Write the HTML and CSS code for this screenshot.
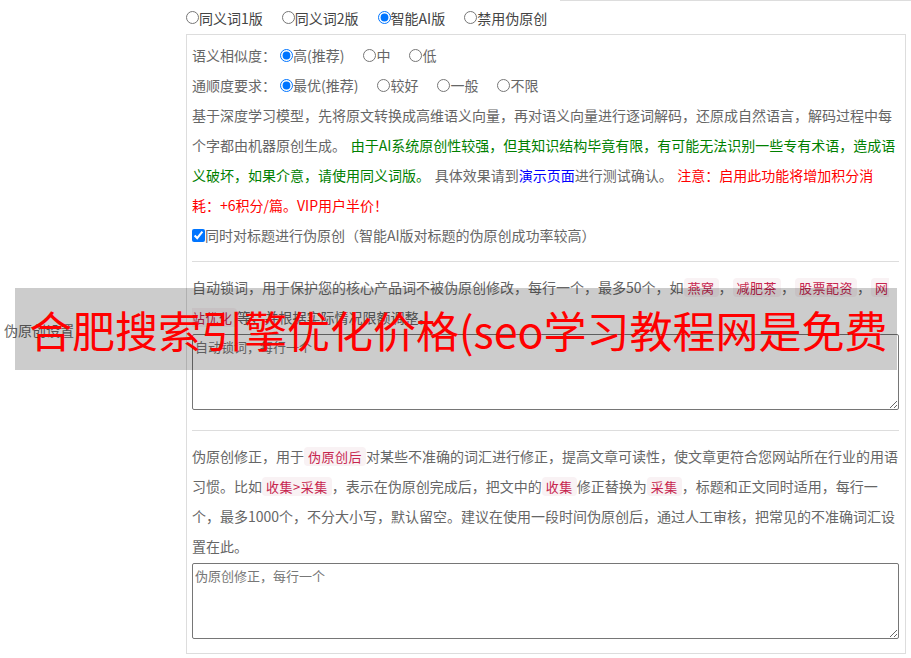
FILE: index.html
```html
<!DOCTYPE html>
<html lang="zh-CN">
<head>
<meta charset="utf-8">
<title>伪原创设置</title>
<link rel="stylesheet" href="styles.css">
</head>
<body>
<div class="page">
  <div class="row">
    <div class="label">伪原创设置</div>
    <div class="content">
      <div class="top-line"></div>
      <div class="modes">
        <label class="mode"><input class="rd" type="radio" name="mode">同义词1版</label>
        <label class="mode"><input class="rd" type="radio" name="mode">同义词2版</label>
        <label class="mode"><input class="rd" type="radio" name="mode" checked>智能AI版</label>
        <label class="mode"><input class="rd" type="radio" name="mode">禁用伪原创</label>
      </div>
      <div class="box">
        <div class="opt-row">
          <span>语义相似度：</span>
          <label class="opt"><input class="rd" type="radio" name="sim" checked>高(推荐)</label>
          <label class="opt"><input class="rd" type="radio" name="sim">中</label>
          <label class="opt"><input class="rd" type="radio" name="sim">低</label>
        </div>
        <div class="opt-row">
          <span>通顺度要求：</span>
          <label class="opt"><input class="rd" type="radio" name="flu" checked>最优(推荐)</label>
          <label class="opt"><input class="rd" type="radio" name="flu">较好</label>
          <label class="opt"><input class="rd" type="radio" name="flu">一般</label>
          <label class="opt"><input class="rd" type="radio" name="flu">不限</label>
        </div>
        <p class="para">基于深度学习模型，先将原文转换成高维语义向量，再对语义向量进行逐词解码，还原成自然语言，解码过程中每个字都由机器原创生成。 <span class="green">由于AI系统原创性较强，但其知识结构毕竟有限，有可能无法识别一些专有术语，造成语义破坏，如果介意，请使用同义词版。</span> 具体效果请到<span class="blue">演示页面</span>进行测试确认。 <span class="red">注意：启用此功能将增加积分消耗：+6积分/篇。VIP用户半价！</span></p>
        <div class="check-row">
          <label class="chk"><input class="cb" type="checkbox" checked>同时对标题进行伪原创（智能AI版对标题的伪原创成功率较高）</label>
        </div>
        <div class="sep sep-first"></div>
        <p class="para">自动锁词，用于保护您的核心产品词不被伪原创修改，每行一个，最多50个，如<span class="tag">燕窝</span>，<span class="tag">减肥茶</span>，<span class="tag">股票配资</span>，<span class="tag">网站优化</span>等，并根据实际情况限额调整。</p>
        <textarea class="ta" placeholder="自动锁词，每行一个"></textarea>
        <div class="sep sep-big"></div>
        <p class="para">伪原创修正，用于<span class="tag">伪原创后</span>对某些不准确的词汇进行修正，提高文章可读性，使文章更符合您网站所在行业的用语习惯。比如<span class="tag">收集&gt;采集</span>，表示在伪原创完成后，把文中的<span class="tag">收集</span>修正替换为<span class="tag">采集</span>，标题和正文同时适用，每行一个，最多1000个，不分大小写，默认留空。建议在使用一段时间伪原创后，通过人工审核，把常见的不准确词汇设置在此。</p>
        <textarea class="ta" placeholder="伪原创修正，每行一个"></textarea>
      </div>
    </div>
  </div>
  <div class="banner">合肥搜索引擎优化价格(seo学习教程网是免费</div>
</div>
</body>
</html>
```
FILE: styles.css
```css
body {
  margin: 0;
  font-family: "Noto Sans CJK SC", "Microsoft YaHei", sans-serif;
  font-size: 14px;
  color: #666;
  background: #fff;
}

.page {
  position: relative;
  width: 911px;
}

.row {
  display: flex;
  align-items: center;
}

.label {
  flex: none;
  width: 186px;
  box-sizing: border-box;
  padding-left: 4px;
  color: #666;
}

.content {
  flex: none;
  width: 725px;
  padding-bottom: 6px;
}

.top-line {
  height: 1px;
  margin-left: 374px;
  background: #ddd;
}

.modes {
  height: 33px;
  display: flex;
  align-items: center;
  color: #444;
}

.mode {
  display: inline-flex;
  align-items: center;
  margin-right: 19px;
}

.rd {
  width: 13px;
  height: 13px;
  margin: 0;
}

.box {
  width: 720px;
  box-sizing: border-box;
  border: 1px solid #ddd;
  padding: 5px 6px 14px 5px;
}

.opt-row {
  height: 30px;
  display: flex;
  align-items: center;
}

.opt {
  display: inline-flex;
  align-items: center;
  margin-right: 15px;
}

.opt .rd {
  margin-left: 4px;
}

.para {
  margin: 0;
  line-height: 30px;
  word-spacing: 1.5px;
}

.check-row {
  height: 30px;
  display: flex;
  align-items: center;
}

.chk {
  display: inline-flex;
  align-items: center;
}

.cb {
  width: 13px;
  height: 13px;
  margin: 0;
}

.sep {
  height: 1px;
  background: #ddd;
  margin: 10px 0;
}

.sep-first {
  margin-top: 11px;
}

.sep-big {
  margin-top: 20px;
}

.ta {
  display: block;
  width: 100%;
  height: 76px;
  box-sizing: border-box;
  margin: 2px 0 0;
  border: 1px solid #767676;
  border-radius: 2px;
  padding: 2px;
  font-family: "Noto Sans CJK SC", sans-serif;
  font-size: 13px;
}

.ta::placeholder {
  color: #777;
}

.green { color: #008000; }
.blue { color: #0000ff; }
.red { color: #ff0000; }

.tag {
  font-size: 13px;
  line-height: 1;
  letter-spacing: 0.5px;
  padding: 0 4px;
  color: #c7254e;
  background: #f9f2f4;
  border-radius: 4px;
}

.banner {
  position: absolute;
  left: 15px;
  top: 288px;
  width: 882px;
  height: 82px;
  box-sizing: border-box;
  padding-left: 14px;
  background: rgba(0, 0, 0, 0.2);
  color: #ff0000;
  font-size: 43px;
  line-height: 82px;
  white-space: nowrap;
  overflow: hidden;
}
```
